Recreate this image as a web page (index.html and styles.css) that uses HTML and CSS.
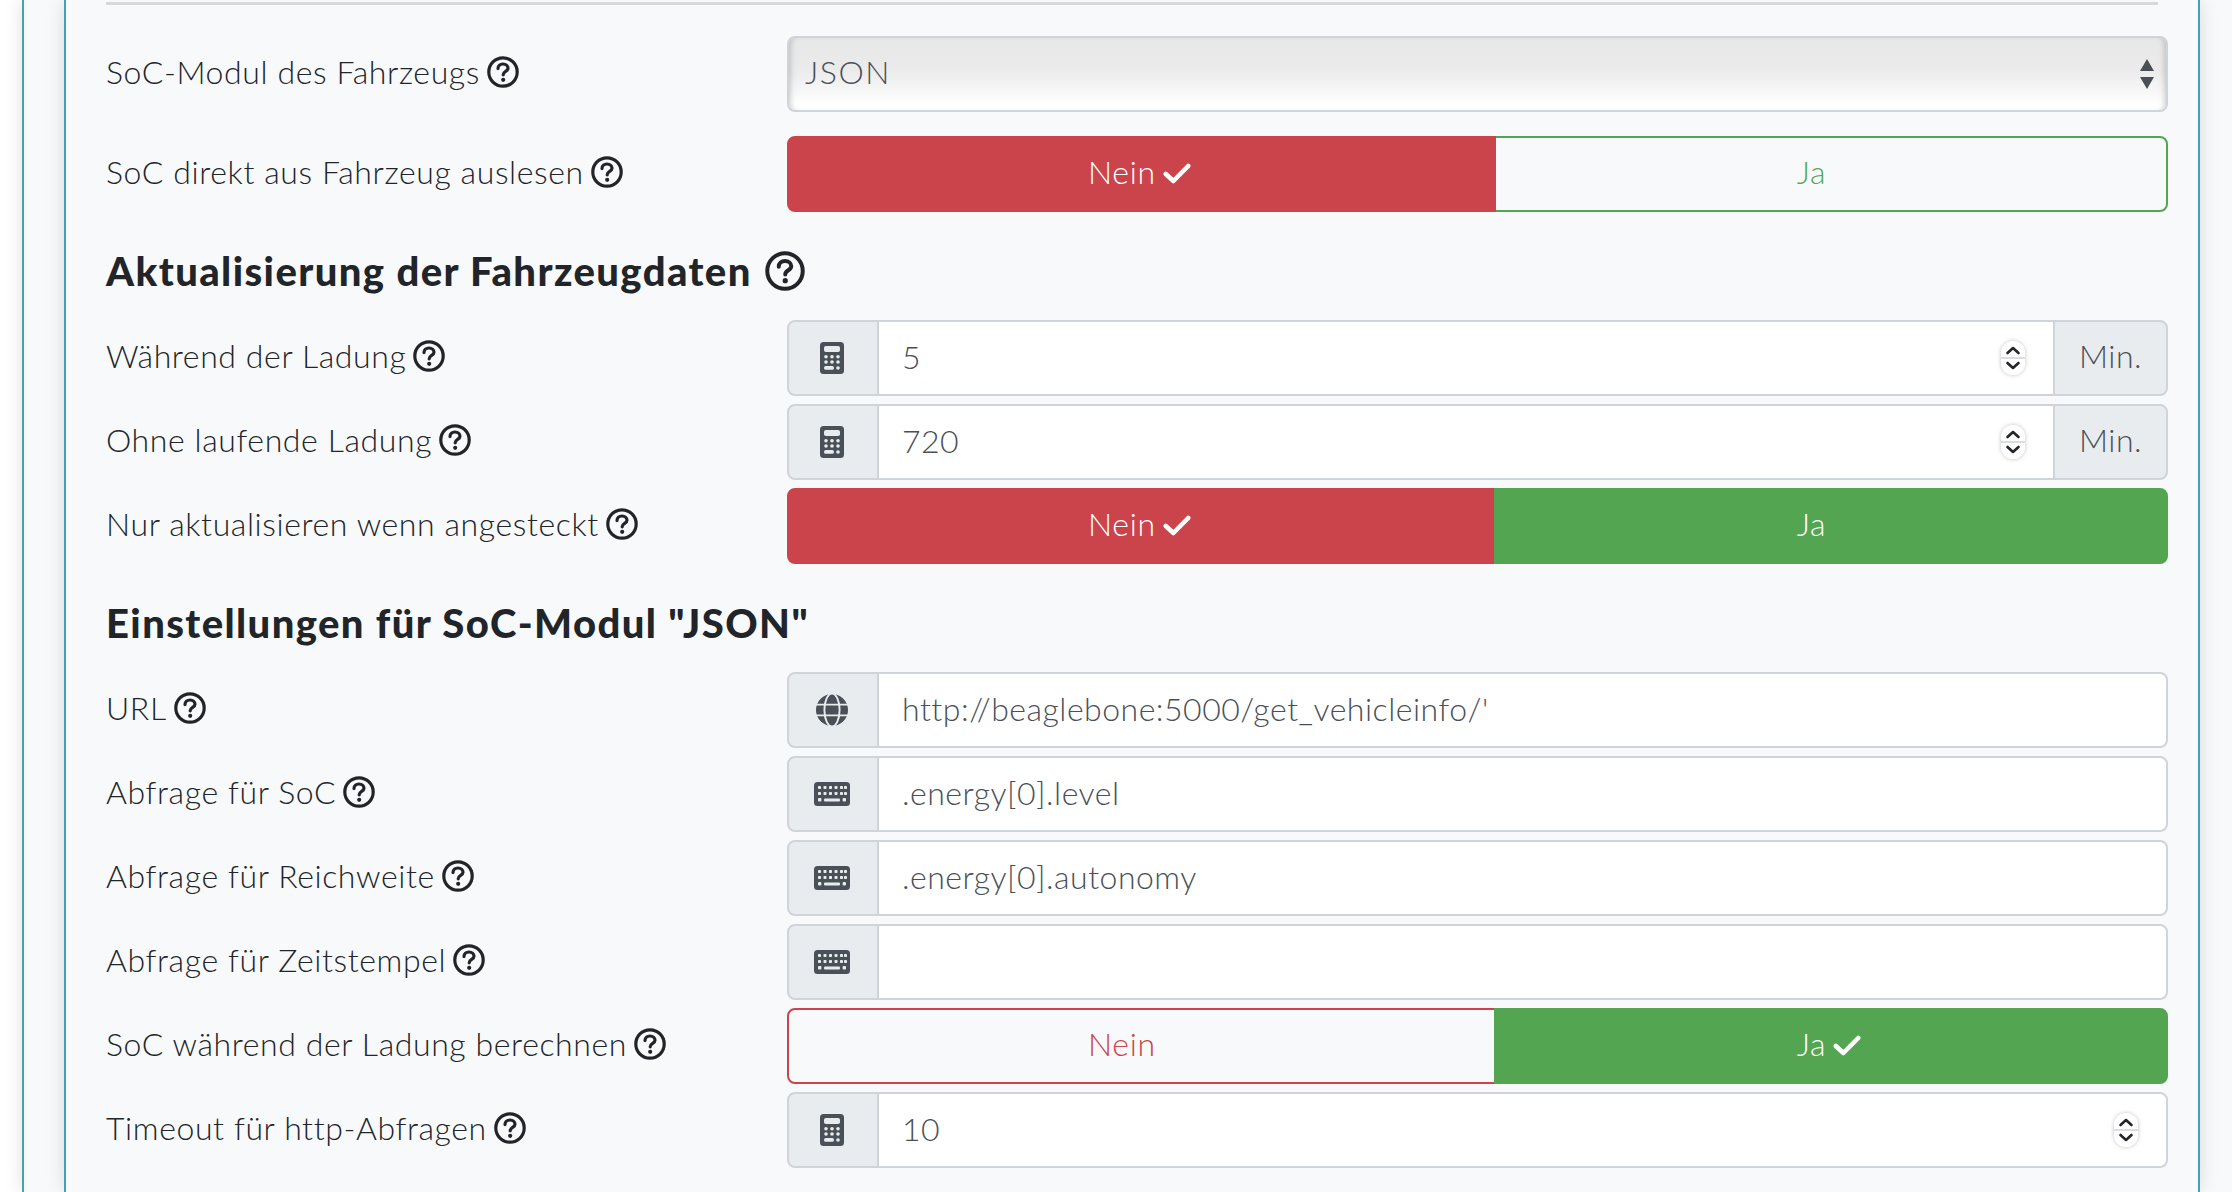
FILE: index.html
```html
<!DOCTYPE html>
<html lang="de">
<head>
<meta charset="utf-8">
<title>SoC-Modul</title>
<link rel="stylesheet" href="styles.css">
</head>
<body>
<svg class="defs" width="0" height="0" aria-hidden="true">
  <symbol id="help" viewBox="0 0 32 32">
    <circle cx="16" cy="16" r="14.2" fill="none" stroke="currentColor" stroke-width="3.2"/>
    <path d="M11 12.6c0-2.9 2.2-4.6 5-4.6s5 1.7 5 4.2c0 3.4-4.8 3-4.8 6.6" fill="none" stroke="currentColor" stroke-width="3.2" stroke-linecap="round"/>
    <circle cx="16.2" cy="23.8" r="2.1" fill="currentColor"/>
  </symbol>
  <symbol id="check" viewBox="0 0 28 21">
    <path d="M2.8 11 10.4 18 25.2 3" fill="none" stroke="currentColor" stroke-width="4.6" stroke-linecap="round" stroke-linejoin="round"/>
  </symbol>
  <symbol id="calc" viewBox="0 0 24 32">
    <rect width="24" height="32" rx="3.5" fill="#495057"/>
    <rect x="4" y="4" width="16" height="6" rx="2" fill="#e9ecef"/>
    <g fill="#e9ecef">
      <circle cx="6" cy="14.7" r="1.8"/><circle cx="12" cy="14.7" r="1.8"/><circle cx="18" cy="14.7" r="1.8"/>
      <circle cx="6" cy="20" r="1.8"/><circle cx="12" cy="20" r="1.8"/><circle cx="18" cy="20" r="1.8"/>
      <rect x="4" y="24" width="10" height="3.8" rx="1.9"/><circle cx="18" cy="26" r="1.8"/>
    </g>
  </symbol>
  <symbol id="kbd" viewBox="0 0 36 24">
    <rect width="36" height="24" rx="3.5" fill="#495057"/>
    <g fill="#e9ecef">
      <rect x="4" y="4" width="3" height="3" rx=".8"/><rect x="9.5" y="4" width="3" height="3" rx=".8"/><rect x="15" y="4" width="3" height="3" rx=".8"/><rect x="20.5" y="4" width="3" height="3" rx=".8"/><rect x="26" y="4" width="3" height="3" rx=".8"/><rect x="30" y="4" width="3" height="3" rx=".8"/>
      <rect x="4" y="10" width="3" height="3" rx=".8"/><rect x="9.5" y="10" width="3" height="3" rx=".8"/><rect x="15" y="10" width="3" height="3" rx=".8"/><rect x="20.5" y="10" width="3" height="3" rx=".8"/><rect x="26" y="10" width="3" height="3" rx=".8"/><rect x="30" y="10" width="3" height="3" rx=".8"/>
      <rect x="4" y="16" width="3.4" height="3.6" rx="1"/><rect x="10" y="16.4" width="16" height="3.2" rx="1"/><rect x="28.6" y="16" width="3.4" height="3.6" rx="1"/>
    </g>
  </symbol>
  <symbol id="globe" viewBox="0 0 32 32">
    <circle cx="16" cy="16" r="16" fill="#495057"/>
    <g fill="none" stroke="#e9ecef" stroke-width="1.9">
      <ellipse cx="16" cy="16" rx="7.6" ry="16.5"/>
      <path d="M-1 10.6h34M-1 21.4h34"/>
    </g>
  </symbol>
  <symbol id="spin" viewBox="0 0 24 34">
    <path d="M6.5 12 12 7l5.5 5M6.5 22 12 27l5.5-5" fill="none" stroke="#212529" stroke-width="2.6" stroke-linecap="round" stroke-linejoin="round"/>
  </symbol>
</svg>

<div class="outer">
  <div class="inner">
    <hr class="rule">

    <div class="row row-wide">
      <label class="label">SoC-Modul des Fahrzeugs <svg class="help"><use href="#help"/></svg></label>
      <div class="select-wrap">
        <select class="select"><option>JSON</option></select>
        <svg class="select-arrows" viewBox="0 0 14 30"><path d="M7 0 14 12H0zM7 30 0 18h14z"/></svg>
      </div>
    </div>

    <div class="row">
      <label class="label">SoC direkt aus Fahrzeug auslesen <svg class="help"><use href="#help"/></svg></label>
      <div class="toggle">
        <button class="btn btn-red is-on">Nein <svg class="tick"><use href="#check"/></svg></button>
        <button class="btn btn-green-outline">Ja <svg class="tick tick-hidden"><use href="#check"/></svg></button>
      </div>
    </div>

    <h3 class="heading">Aktualisierung der Fahrzeugdaten <svg class="help help-lg"><use href="#help"/></svg></h3>

    <div class="row">
      <label class="label">Während der Ladung <svg class="help"><use href="#help"/></svg></label>
      <div class="group">
        <span class="addon addon-icon"><svg class="i-calc"><use href="#calc"/></svg></span>
        <span class="field"><input class="input" value="5"><svg class="spin"><use href="#spin"/></svg></span>
        <span class="addon addon-unit">Min.</span>
      </div>
    </div>

    <div class="row">
      <label class="label">Ohne laufende Ladung <svg class="help"><use href="#help"/></svg></label>
      <div class="group">
        <span class="addon addon-icon"><svg class="i-calc"><use href="#calc"/></svg></span>
        <span class="field"><input class="input" value="720"><svg class="spin"><use href="#spin"/></svg></span>
        <span class="addon addon-unit">Min.</span>
      </div>
    </div>

    <div class="row">
      <label class="label">Nur aktualisieren wenn angesteckt <svg class="help"><use href="#help"/></svg></label>
      <div class="toggle">
        <button class="btn btn-red">Nein <svg class="tick"><use href="#check"/></svg></button>
        <button class="btn btn-green is-on">Ja <svg class="tick tick-hidden"><use href="#check"/></svg></button>
      </div>
    </div>

    <h3 class="heading">Einstellungen für SoC-Modul "JSON"</h3>

    <div class="row">
      <label class="label">URL <svg class="help"><use href="#help"/></svg></label>
      <div class="group">
        <span class="addon addon-icon"><svg class="i-globe"><use href="#globe"/></svg></span>
        <span class="field"><input class="input" value="http://beaglebone:5000/get_vehicleinfo/'"></span>
      </div>
    </div>

    <div class="row">
      <label class="label">Abfrage für SoC <svg class="help"><use href="#help"/></svg></label>
      <div class="group">
        <span class="addon addon-icon"><svg class="i-kbd"><use href="#kbd"/></svg></span>
        <span class="field"><input class="input" value=".energy[0].level"></span>
      </div>
    </div>

    <div class="row">
      <label class="label">Abfrage für Reichweite <svg class="help"><use href="#help"/></svg></label>
      <div class="group">
        <span class="addon addon-icon"><svg class="i-kbd"><use href="#kbd"/></svg></span>
        <span class="field"><input class="input" value=".energy[0].autonomy"></span>
      </div>
    </div>

    <div class="row">
      <label class="label">Abfrage für Zeitstempel <svg class="help"><use href="#help"/></svg></label>
      <div class="group">
        <span class="addon addon-icon"><svg class="i-kbd"><use href="#kbd"/></svg></span>
        <span class="field"><input class="input" value=""></span>
      </div>
    </div>

    <div class="row">
      <label class="label">SoC während der Ladung berechnen <svg class="help"><use href="#help"/></svg></label>
      <div class="toggle">
        <button class="btn btn-red-outline">Nein <svg class="tick tick-hidden"><use href="#check"/></svg></button>
        <button class="btn btn-green is-on">Ja <svg class="tick"><use href="#check"/></svg></button>
      </div>
    </div>

    <div class="row">
      <label class="label">Timeout für http-Abfragen <svg class="help"><use href="#help"/></svg></label>
      <div class="group">
        <span class="addon addon-icon"><svg class="i-calc"><use href="#calc"/></svg></span>
        <span class="field"><input class="input" value="10"><svg class="spin"><use href="#spin"/></svg></span>
      </div>
    </div>
  </div>
</div>
</body>
</html>
```

FILE: styles.css
```css
* { box-sizing: border-box; }

html, body { height: 100%; }

body {
  margin: 0;
  overflow: hidden;
  background: #fff;
  color: #212529;
  font-family: "Lato", "Noto Sans", sans-serif;
  font-size: 32px;
  font-weight: 300;
  line-height: 48px;
}

.defs { position: absolute; }

.outer {
  margin-left: 22px;
  height: 100%;
  padding-left: 40px;
  border-left: 2px solid #44a1ba;
  background: #f8f9fa;
  box-shadow: 0 0 18px rgba(0, 0, 0, .12);
}

.inner {
  width: 2136px;
  height: 100%;
  padding: 2px 30px 0 40px;
  border-left: 2px solid #44a1ba;
  border-right: 2px solid #44a1ba;
  background: #f8f9fa;
  box-shadow: 0 0 18px rgba(0, 0, 0, .12);
}

.rule {
  width: 2052px;
  height: 3px;
  margin: 0 0 31px;
  border: 0;
  background: #d6d8db;
}

.row {
  display: grid;
  grid-template-columns: 681px 1fr;
  align-items: center;
  height: 76px;
  margin-bottom: 8px;
}

.row-wide { margin-bottom: 24px; }

.label {
  display: flex;
  align-items: center;
  gap: 7px;
  padding-bottom: 4px;
  letter-spacing: .6px;
  white-space: nowrap;
}

.help {
  flex: none;
  width: 32px;
  height: 32px;
  color: #212529;
}

.help-lg {
  width: 40px;
  height: 40px;
}

.heading {
  display: flex;
  align-items: center;
  gap: 13px;
  height: 100px;
  margin: 0;
  padding-top: 2px;
  font-size: 40px;
  font-weight: 900;
  letter-spacing: 1.4px;
  line-height: 48px;
}

.select-wrap {
  position: relative;
  height: 76px;
}

.select {
  display: block;
  width: 100%;
  height: 100%;
  padding: 0 16px 4px;
  border: 2px solid #ced4da;
  border-radius: 8px;
  background: linear-gradient(#e7e7e7 0%, #ebebeb 45%, #fff 92%);
  box-shadow: inset 6px 0 6px -5px rgba(0, 0, 0, .22), inset -6px 0 6px -5px rgba(0, 0, 0, .22);
  color: #495057;
  font: inherit;
  letter-spacing: 1.5px;
  -webkit-appearance: none;
  appearance: none;
}

.select-arrows {
  position: absolute;
  top: 23px;
  right: 14px;
  width: 14px;
  height: 30px;
  fill: #495057;
}

.toggle {
  display: flex;
  height: 76px;
}

.btn {
  position: relative;
  display: flex;
  flex: 1 1 auto;
  align-items: center;
  justify-content: center;
  gap: 7px;
  height: 76px;
  border: 2px solid transparent;
  background: none;
  font: inherit;
  letter-spacing: .7px;
}

.btn:first-child {
  padding: 0 24px 5px 20px;
  border-radius: 8px 0 0 8px;
}

.btn:last-child {
  margin-left: -2px;
  padding: 0 26px 5px 22px;
  border-radius: 0 8px 8px 0;
}

.is-on { z-index: 1; }

.btn-red { border-color: #cc444b; background: #cc444b; color: #fff; }
.btn-green { border-color: #53a552; background: #53a552; color: #fff; }
.btn-red-outline { border-color: #cc444b; color: #cc444b; }
.btn-green-outline { border-color: #53a552; color: #53a552; }

.tick {
  flex: none;
  width: 28px;
  height: 21px;
  margin-top: 3px;
}

.tick-hidden { visibility: hidden; }

.group {
  display: flex;
  height: 76px;
}

.addon {
  display: flex;
  flex: none;
  align-items: center;
  justify-content: center;
  border: 2px solid #ced4da;
  background: #e9ecef;
  color: #495057;
}

.addon-icon {
  width: 92px;
  padding-right: 2px;
  border-radius: 8px 0 0 8px;
}

.addon-unit {
  width: 115px;
  margin-left: -2px;
  padding-bottom: 4px;
  border-radius: 0 8px 8px 0;
  letter-spacing: .5px;
}

.i-calc { width: 24px; height: 32px; }
.i-kbd { width: 36px; height: 24px; }
.i-globe { width: 32px; height: 32px; }

.field {
  position: relative;
  flex: 1 1 0;
  min-width: 0;
  margin-left: -2px;
}

.input {
  display: block;
  width: 100%;
  height: 76px;
  padding: 0 24px 4px 23px;
  border: 2px solid #ced4da;
  border-radius: 0;
  background: #fff;
  color: #495057;
  font: inherit;
  letter-spacing: .5px;
  outline: 0;
}

.field:last-child .input { border-radius: 0 8px 8px 0; }

.spin {
  position: absolute;
  top: 21px;
  right: 30px;
  width: 24px;
  height: 34px;
  border-radius: 12px;
  background: linear-gradient(#fff 48%, #dcdcdc 48%, #dcdcdc 52%, #fff 52%);
  box-shadow: 0 0 4px rgba(0, 0, 0, .25);
}
```
